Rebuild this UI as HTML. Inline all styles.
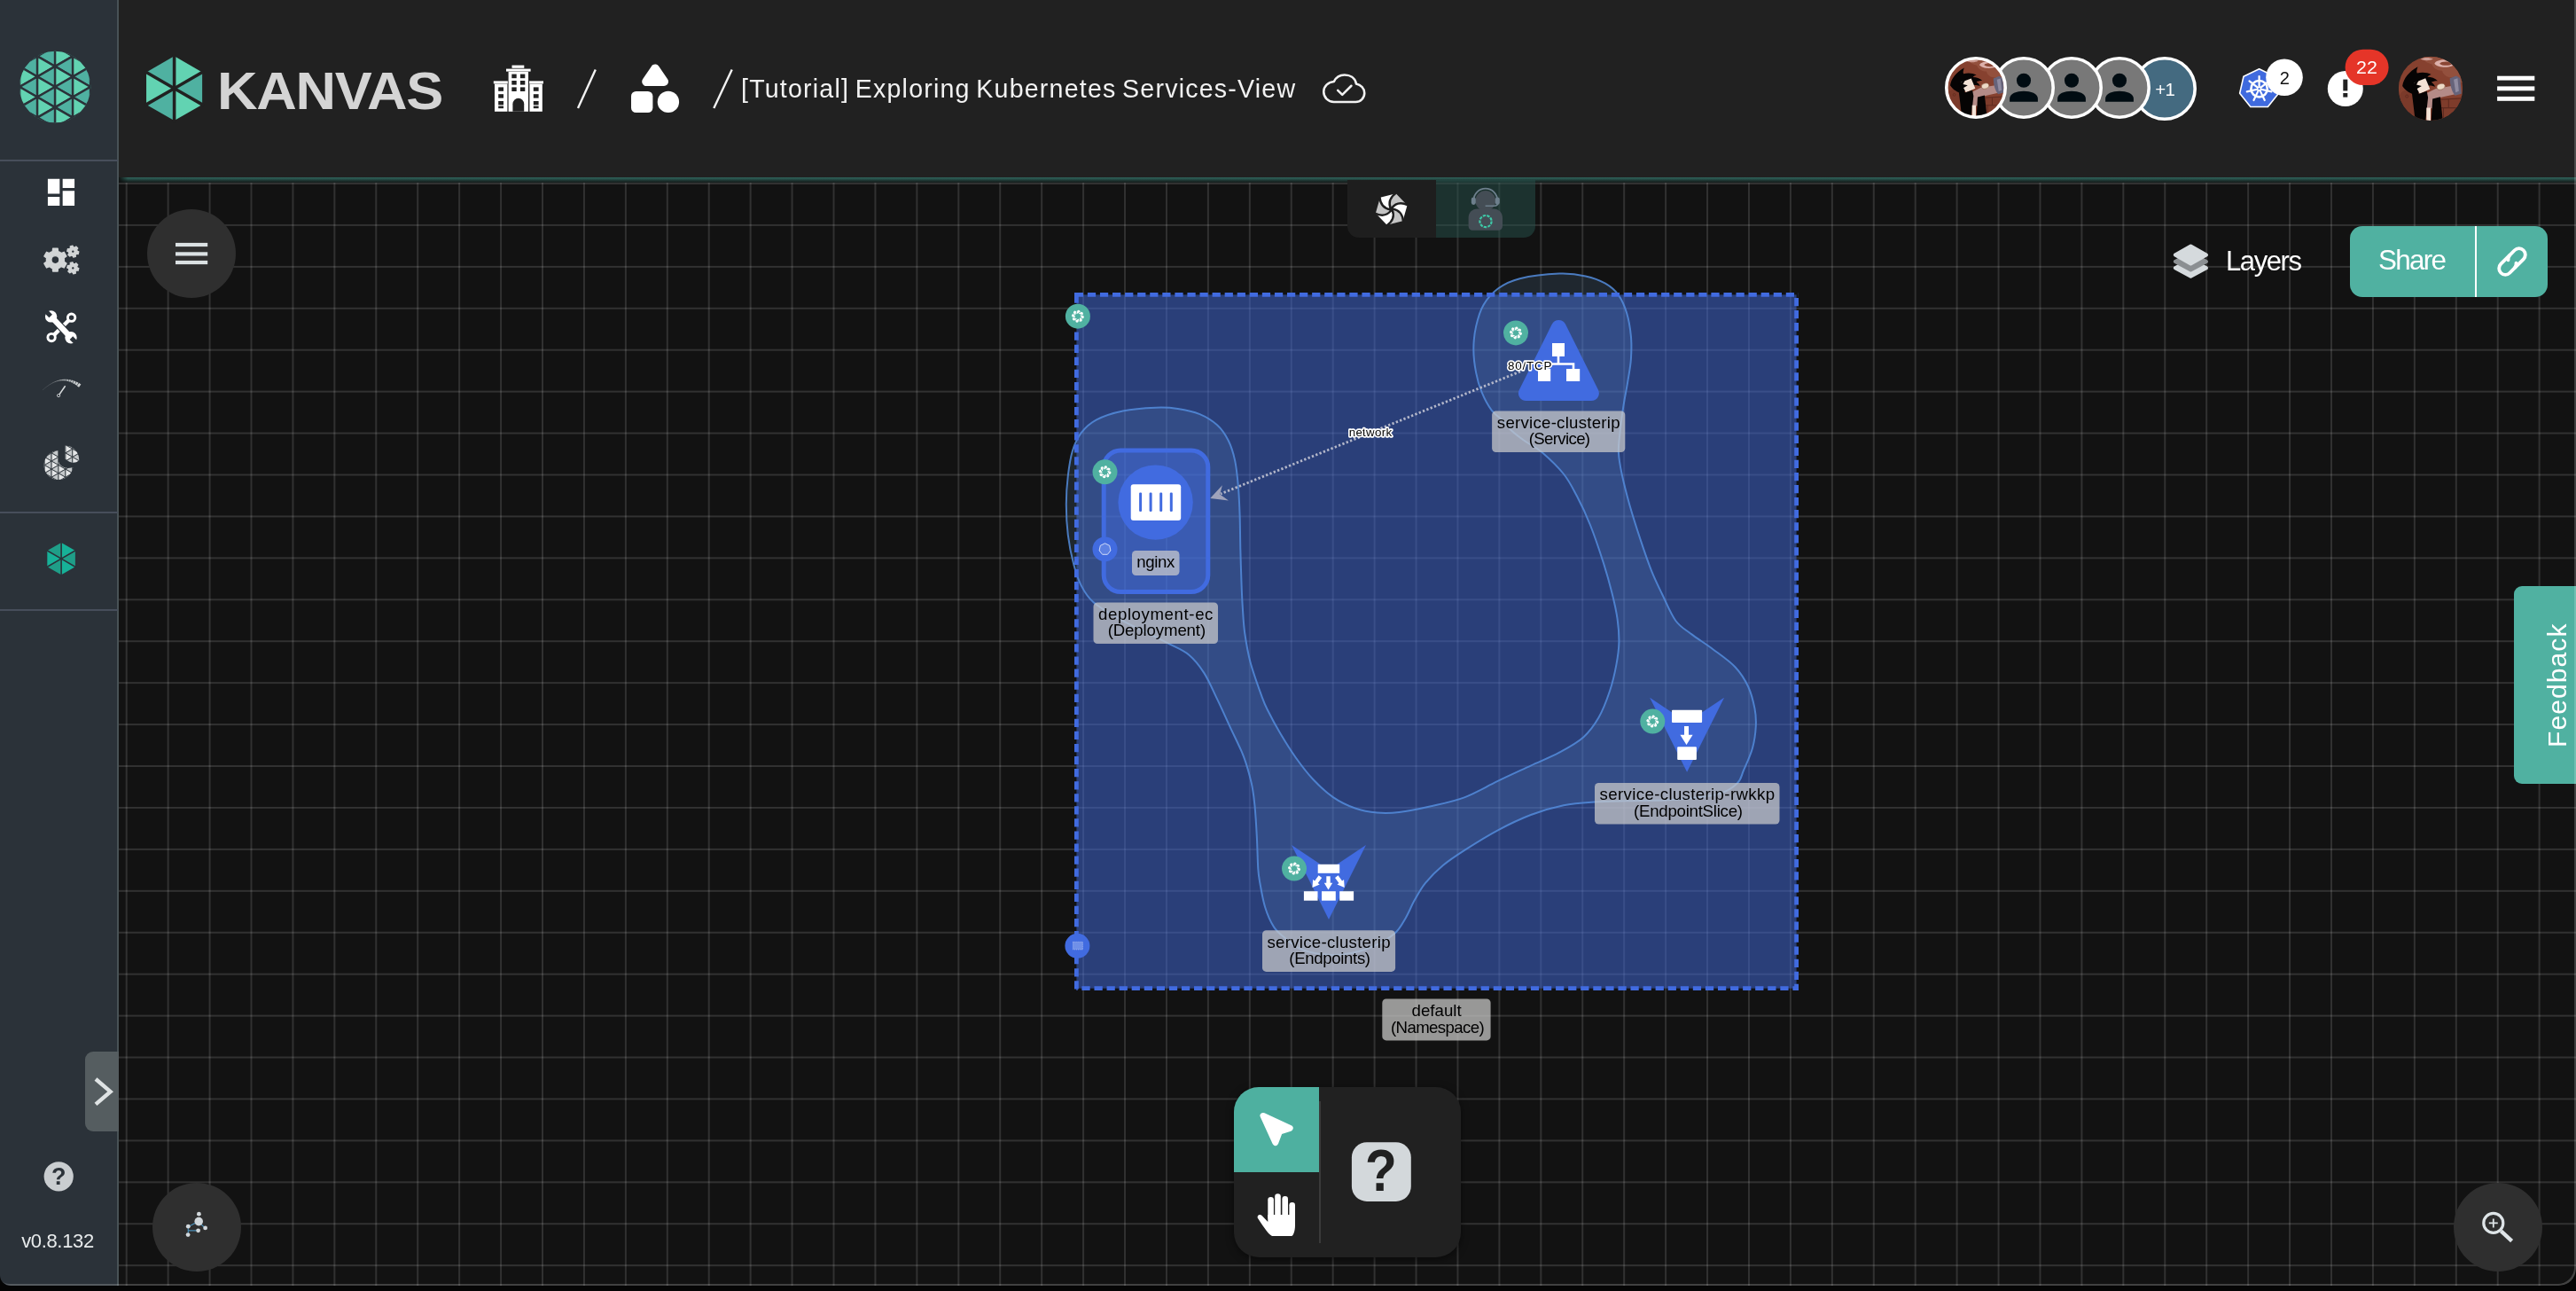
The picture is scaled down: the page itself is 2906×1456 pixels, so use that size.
<!DOCTYPE html>
<html lang="en"><head><meta charset="utf-8"><title>Kanvas</title>
<style>
html,body{margin:0;padding:0;background:#050505;}
body{width:2906px;height:1456px;overflow:hidden;position:relative;font-family:"Liberation Sans", Arial, sans-serif;}
#win{position:absolute;left:0;top:0;width:2906px;height:1450.2px;background:#121212;overflow:hidden;border-radius:0 0 19px 12px;}
#edge{position:absolute;left:0;top:-4px;width:2906px;height:1454.2px;border-radius:0 0 19px 12px;box-shadow:inset -1.9px -1.9px 0 rgba(255,255,255,0.2);pointer-events:none;}
svg text{font-family:"Liberation Sans", Arial, sans-serif;}
#win>*{will-change:transform;}
.abs{position:absolute;}
</style></head><body>
<div id="win">
<svg class="abs" style="left:0;top:0" width="2906" height="1456" viewBox="0 0 2906 1456">
<g fill="#fff" fill-opacity="0.135"><rect x="141.70" y="200" width="2" height="1256"/><rect x="188.63" y="200" width="2" height="1256"/><rect x="235.56" y="200" width="2" height="1256"/><rect x="282.49" y="200" width="2" height="1256"/><rect x="329.42" y="200" width="2" height="1256"/><rect x="376.35" y="200" width="2" height="1256"/><rect x="423.28" y="200" width="2" height="1256"/><rect x="470.21" y="200" width="2" height="1256"/><rect x="517.14" y="200" width="2" height="1256"/><rect x="564.07" y="200" width="2" height="1256"/><rect x="611.00" y="200" width="2" height="1256"/><rect x="657.93" y="200" width="2" height="1256"/><rect x="704.86" y="200" width="2" height="1256"/><rect x="751.79" y="200" width="2" height="1256"/><rect x="798.72" y="200" width="2" height="1256"/><rect x="845.65" y="200" width="2" height="1256"/><rect x="892.58" y="200" width="2" height="1256"/><rect x="939.51" y="200" width="2" height="1256"/><rect x="986.44" y="200" width="2" height="1256"/><rect x="1033.37" y="200" width="2" height="1256"/><rect x="1080.30" y="200" width="2" height="1256"/><rect x="1127.23" y="200" width="2" height="1256"/><rect x="1174.16" y="200" width="2" height="1256"/><rect x="1221.09" y="200" width="2" height="1256"/><rect x="1268.02" y="200" width="2" height="1256"/><rect x="1314.95" y="200" width="2" height="1256"/><rect x="1361.88" y="200" width="2" height="1256"/><rect x="1408.81" y="200" width="2" height="1256"/><rect x="1455.74" y="200" width="2" height="1256"/><rect x="1502.67" y="200" width="2" height="1256"/><rect x="1549.60" y="200" width="2" height="1256"/><rect x="1596.53" y="200" width="2" height="1256"/><rect x="1643.46" y="200" width="2" height="1256"/><rect x="1690.39" y="200" width="2" height="1256"/><rect x="1737.32" y="200" width="2" height="1256"/><rect x="1784.25" y="200" width="2" height="1256"/><rect x="1831.18" y="200" width="2" height="1256"/><rect x="1878.11" y="200" width="2" height="1256"/><rect x="1925.04" y="200" width="2" height="1256"/><rect x="1971.97" y="200" width="2" height="1256"/><rect x="2018.90" y="200" width="2" height="1256"/><rect x="2065.83" y="200" width="2" height="1256"/><rect x="2112.76" y="200" width="2" height="1256"/><rect x="2159.69" y="200" width="2" height="1256"/><rect x="2206.62" y="200" width="2" height="1256"/><rect x="2253.55" y="200" width="2" height="1256"/><rect x="2300.48" y="200" width="2" height="1256"/><rect x="2347.41" y="200" width="2" height="1256"/><rect x="2394.34" y="200" width="2" height="1256"/><rect x="2441.27" y="200" width="2" height="1256"/><rect x="2488.20" y="200" width="2" height="1256"/><rect x="2535.13" y="200" width="2" height="1256"/><rect x="2582.06" y="200" width="2" height="1256"/><rect x="2628.99" y="200" width="2" height="1256"/><rect x="2675.92" y="200" width="2" height="1256"/><rect x="2722.85" y="200" width="2" height="1256"/><rect x="2769.78" y="200" width="2" height="1256"/><rect x="2816.71" y="200" width="2" height="1256"/><rect x="2863.64" y="200" width="2" height="1256"/><rect x="134" y="206.00" width="2772" height="2"/><rect x="134" y="252.93" width="2772" height="2"/><rect x="134" y="299.86" width="2772" height="2"/><rect x="134" y="346.79" width="2772" height="2"/><rect x="134" y="393.72" width="2772" height="2"/><rect x="134" y="440.65" width="2772" height="2"/><rect x="134" y="487.58" width="2772" height="2"/><rect x="134" y="534.51" width="2772" height="2"/><rect x="134" y="581.44" width="2772" height="2"/><rect x="134" y="628.37" width="2772" height="2"/><rect x="134" y="675.30" width="2772" height="2"/><rect x="134" y="722.23" width="2772" height="2"/><rect x="134" y="769.16" width="2772" height="2"/><rect x="134" y="816.09" width="2772" height="2"/><rect x="134" y="863.02" width="2772" height="2"/><rect x="134" y="909.95" width="2772" height="2"/><rect x="134" y="956.88" width="2772" height="2"/><rect x="134" y="1003.81" width="2772" height="2"/><rect x="134" y="1050.74" width="2772" height="2"/><rect x="134" y="1097.67" width="2772" height="2"/><rect x="134" y="1144.60" width="2772" height="2"/><rect x="134" y="1191.53" width="2772" height="2"/><rect x="134" y="1238.46" width="2772" height="2"/><rect x="134" y="1285.39" width="2772" height="2"/><rect x="134" y="1332.32" width="2772" height="2"/><rect x="134" y="1379.25" width="2772" height="2"/><rect x="134" y="1426.18" width="2772" height="2"/></g>
<rect x="1214.4" y="332.4" width="812.2" height="782.3" fill="#416be0" fill-opacity="0.5"/><path d="M1759.0,308.6C1746.6,309.1 1725.9,311.4 1714.4,314.2C1702.9,317.0 1697.0,320.4 1690.2,325.3C1683.4,330.2 1677.7,336.8 1673.5,343.9C1669.3,351.0 1667.0,359.7 1665.1,368.1C1663.2,376.5 1662.3,385.4 1662.3,394.1C1662.3,402.8 1663.5,412.1 1665.1,420.1C1666.6,428.2 1668.6,435.3 1671.6,442.4C1674.5,449.5 1678.9,457.6 1682.8,462.9C1686.7,468.2 1691.4,470.3 1695.0,474.0C1698.6,477.7 1700.1,481.0 1704.4,485.0C1708.7,489.0 1715.2,493.9 1721.0,498.0C1726.8,502.1 1731.9,503.6 1739.1,509.7C1746.2,515.8 1757.3,526.2 1763.9,534.5C1770.5,542.8 1773.8,549.8 1778.8,559.3C1783.8,568.8 1788.8,579.1 1793.7,591.5C1798.7,603.9 1804.4,620.9 1808.5,633.7C1812.6,646.5 1815.7,657.7 1818.4,668.4C1821.1,679.1 1823.3,688.7 1824.6,698.1C1825.9,707.5 1826.6,716.2 1826.4,724.8C1826.2,733.4 1825.1,740.5 1823.4,749.6C1821.7,758.7 1819.3,769.4 1816.0,779.3C1812.7,789.2 1808.6,800.3 1803.6,809.0C1798.6,817.7 1793.6,824.8 1786.2,831.4C1778.8,838.0 1768.9,843.3 1759.0,848.7C1749.1,854.1 1738.3,858.2 1726.7,863.6C1715.1,869.0 1701.9,875.0 1689.6,880.9C1677.2,886.8 1665.0,894.4 1652.6,899.1C1640.2,903.8 1627.8,906.2 1615.4,909.0C1603.0,911.8 1588.6,914.8 1578.3,916.0C1568.0,917.2 1561.8,917.2 1553.5,916.5C1545.2,915.8 1537.0,914.4 1528.7,911.5C1520.4,908.6 1511.8,904.5 1503.9,899.1C1496.1,893.7 1488.6,886.7 1481.6,879.3C1474.6,871.9 1468.0,863.2 1461.8,854.5C1455.6,845.8 1449.8,836.4 1444.4,827.3C1439.0,818.2 1433.2,807.2 1429.6,800.0C1426.0,792.8 1426.1,792.8 1422.9,783.9C1419.7,775.0 1413.6,758.3 1410.5,746.7C1407.4,735.1 1405.8,724.8 1404.3,714.5C1402.8,704.2 1402.4,693.9 1401.8,684.8C1401.2,675.7 1401.0,671.1 1400.6,660.0C1400.2,648.9 1399.6,631.4 1399.3,618.3C1399.0,605.1 1399.0,592.7 1398.6,581.1C1398.2,569.5 1397.8,559.2 1396.9,548.9C1396.0,538.6 1395.0,527.8 1393.1,519.1C1391.2,510.4 1389.0,503.4 1385.7,496.8C1382.4,490.2 1378.7,484.4 1373.3,479.5C1367.9,474.6 1360.9,470.2 1353.5,467.1C1346.1,464.0 1337.0,462.1 1328.7,460.9C1320.4,459.7 1314.2,459.3 1303.9,459.7C1293.6,460.1 1277.9,461.1 1266.7,463.4C1255.5,465.7 1244.8,469.2 1237.0,473.3C1229.2,477.4 1224.2,482.2 1219.7,488.2C1215.2,494.2 1212.2,501.1 1209.7,509.2C1207.2,517.2 1206.0,526.6 1204.8,536.5C1203.6,546.4 1202.8,557.6 1202.8,568.7C1202.8,579.9 1203.4,592.2 1204.8,603.4C1206.2,614.5 1208.5,626.1 1211.0,635.6C1213.5,645.1 1216.0,653.2 1219.7,660.4C1223.4,667.6 1226.3,672.8 1233.3,679.0C1240.3,685.2 1252.1,692.0 1261.8,697.6C1271.5,703.2 1282.0,707.6 1291.5,712.4C1301.0,717.1 1310.5,721.8 1318.8,726.1C1327.1,730.5 1334.5,733.0 1341.1,738.5C1347.7,744.0 1353.0,750.7 1358.4,759.1C1363.8,767.5 1368.3,778.6 1373.3,788.9C1378.3,799.2 1383.2,810.4 1388.2,821.1C1393.2,831.8 1399.1,843.0 1403.0,853.3C1406.9,863.6 1409.6,873.9 1411.7,883.0C1413.8,892.1 1414.4,897.5 1415.4,907.8C1416.4,918.1 1417.3,933.2 1417.9,945.0C1418.5,956.8 1418.7,970.5 1419.2,978.5C1419.7,986.5 1419.6,985.9 1420.9,993.3C1422.2,1000.7 1424.4,1014.3 1427.1,1023.0C1429.8,1031.7 1433.3,1039.6 1437.0,1045.4C1440.7,1051.2 1444.5,1053.6 1449.4,1057.7C1454.4,1061.8 1459.7,1067.0 1466.7,1070.1C1473.7,1073.2 1483.2,1075.3 1491.5,1076.3C1499.8,1077.3 1506.8,1077.7 1516.3,1076.3C1525.8,1074.9 1539.0,1071.6 1548.5,1067.7C1558.0,1063.8 1567.1,1058.2 1573.3,1052.8C1579.5,1047.4 1582.0,1041.6 1585.7,1035.4C1589.4,1029.2 1591.9,1022.2 1595.6,1015.6C1599.3,1009.0 1602.6,1002.4 1608.0,995.8C1613.4,989.2 1620.4,982.2 1627.8,976.0C1635.2,969.8 1642.3,965.2 1652.6,958.6C1662.9,952.0 1677.4,942.9 1689.8,936.3C1702.2,929.7 1714.7,923.7 1727.0,919.0C1739.3,914.3 1752.0,910.6 1763.9,908.2C1775.8,905.8 1786.2,905.3 1798.6,904.5C1811.0,903.7 1823.4,903.6 1838.3,903.2C1853.2,902.8 1871.3,903.2 1887.8,902.0C1904.3,900.8 1925.4,898.9 1937.4,895.8C1949.4,892.7 1954.8,887.9 1959.7,883.4C1964.7,878.9 1964.2,875.1 1967.1,868.5C1970.0,861.9 1974.7,852.0 1977.0,843.7C1979.3,835.5 1980.4,826.4 1980.8,819.0C1981.2,811.6 1981.0,806.6 1979.5,799.1C1978.0,791.6 1975.8,782.1 1972.1,774.3C1968.4,766.4 1963.8,759.0 1957.2,752.0C1950.6,745.0 1940.7,738.4 1932.4,732.2C1924.2,726.0 1914.7,720.3 1907.7,714.9C1900.7,709.5 1895.7,707.4 1890.3,700.0C1884.9,692.6 1880.0,680.2 1875.4,670.8C1870.9,661.4 1867.1,653.9 1863.0,643.6C1858.9,633.3 1854.8,621.3 1850.7,608.9C1846.6,596.5 1841.8,581.6 1838.3,569.2C1834.8,556.8 1831.7,544.4 1829.6,534.5C1827.5,524.6 1826.2,517.9 1825.9,509.7C1825.6,501.5 1826.9,493.9 1827.8,485.2C1828.7,476.5 1830.1,466.3 1831.5,457.3C1832.9,448.3 1834.7,440.0 1836.1,431.3C1837.5,422.6 1839.3,414.0 1839.9,405.3C1840.5,396.6 1840.7,387.9 1839.9,379.2C1839.1,370.5 1837.5,360.9 1835.2,353.2C1832.9,345.5 1829.9,338.4 1825.9,332.8C1821.9,327.2 1817.2,323.3 1811.0,319.7C1804.8,316.1 1797.4,313.2 1788.7,311.4C1780.0,309.5 1771.4,308.1 1759.0,308.6Z" fill="rgb(105,158,218)" fill-opacity="0.15" stroke="rgb(84,140,220)" stroke-opacity="0.85" stroke-width="2"/><g fill="none" stroke="#416be0" stroke-width="4.8" stroke-dasharray="9.25 4.82"><line x1="1214.4" y1="332.4" x2="2029" y2="332.4" stroke-dashoffset="1.6"/><line x1="1214.4" y1="332.4" x2="1214.4" y2="1117.1" stroke-dashoffset="0"/><line x1="1214.4" y1="1114.7" x2="2029" y2="1114.7" stroke-dashoffset="8.07"/><line x1="2026.6" y1="332.4" x2="2026.6" y2="1117.1" stroke-dashoffset="10.55"/></g><rect x="1212" y="330" width="4.8" height="4.8" fill="#416be0"/><line x1="1715" y1="419" x2="1377" y2="557" stroke="#b3b7ca" stroke-width="2.8" stroke-dasharray="2.33 2.33"/><polygon points="1365.2,562 1378.9,547.2 1376.2,557.4 1385.9,564.4" fill="#9fa3bb"/><rect x="1245.2" y="508" width="117.6" height="159.6" rx="19" fill="#416be0" fill-opacity="0.5" stroke="#416be0" stroke-width="5"/><circle cx="1303.6" cy="566.6" r="42.2" fill="#416be0"/><rect x="1275.7" y="546.2" width="56.5" height="40.9" rx="3" fill="#fff"/><rect x="1285.1" y="555.5" width="3" height="21.5" rx="1.2" fill="#416be0"/><rect x="1296.6" y="555.5" width="3" height="21.5" rx="1.2" fill="#416be0"/><rect x="1308.2" y="555.5" width="3" height="21.5" rx="1.2" fill="#416be0"/><rect x="1319.8" y="555.5" width="3" height="21.5" rx="1.2" fill="#416be0"/><rect x="1277.0" y="621.0" width="53.5" height="28.0" rx="4.5" fill="#cccccc" fill-opacity="0.72"/><text x="1303.8" y="640.2" text-anchor="middle" textLength="43.0" lengthAdjust="spacing" font-size="18.64" fill="#000">nginx</text><rect x="1233.5" y="679.4" width="140.5" height="46.6" rx="4.5" fill="#cccccc" fill-opacity="0.72"/><text x="1303.7" y="698.6" text-anchor="middle" textLength="129.4" lengthAdjust="spacing" font-size="18.64" fill="#000">deployment-ec</text><text x="1304.9" y="717.3" text-anchor="middle" textLength="110.4" lengthAdjust="spacing" font-size="18.64" fill="#000">(Deployment)</text><circle cx="1246.5" cy="532.3" r="14" fill="#50b1a1"/><g fill-opacity="1"><ellipse cx="1251.26" cy="532.30" rx="2.72" ry="1.84" transform="rotate(58.0 1251.26 532.30)" fill="#fff"/><ellipse cx="1249.87" cy="535.67" rx="2.72" ry="1.84" transform="rotate(103.0 1249.87 535.67)" fill="#fff"/><ellipse cx="1246.50" cy="537.06" rx="2.72" ry="1.84" transform="rotate(148.0 1246.50 537.06)" fill="#fff"/><ellipse cx="1243.13" cy="535.67" rx="2.72" ry="1.84" transform="rotate(193.0 1243.13 535.67)" fill="#fff"/><ellipse cx="1241.74" cy="532.30" rx="2.72" ry="1.84" transform="rotate(238.0 1241.74 532.30)" fill="#fff"/><ellipse cx="1243.13" cy="528.93" rx="2.72" ry="1.84" transform="rotate(283.0 1243.13 528.93)" fill="#fff"/><ellipse cx="1246.50" cy="527.54" rx="2.72" ry="1.84" transform="rotate(328.0 1246.50 527.54)" fill="#fff"/><ellipse cx="1249.87" cy="528.93" rx="2.72" ry="1.84" transform="rotate(373.0 1249.87 528.93)" fill="#fff"/></g><path d="M1249.19,531.87L1252.03,536.71M1248.70,533.90L1247.30,539.33M1246.93,534.99L1242.09,537.83M1244.90,534.50L1239.47,533.10M1243.81,532.73L1240.97,527.89M1244.30,530.70L1245.70,525.27M1246.07,529.61L1250.91,526.77M1248.10,530.10L1253.53,531.50" stroke="#50b1a1" stroke-width="0.82" fill="none"/><circle cx="1246.5" cy="532.3" r="2.99" fill="#50b1a1"/><circle cx="1246.5" cy="619.4" r="14" fill="#416be0"/><polygon points="1246.5,612.8 1251.7,615.3 1252.9,620.9 1249.4,625.3 1243.6,625.3 1240.1,620.9 1241.3,615.3" fill="#fff" fill-opacity="0.15" stroke="#dfe6fb" stroke-width="0.9"/><path d="M1750.71,365.80A8.6,8.6 0 0,1 1766.09,365.80L1802.98,439.66A8.6,8.6 0 0,1 1795.29,452.10L1721.51,452.10A8.6,8.6 0 0,1 1713.82,439.66Z" fill="#416be0"/><rect x="1751" y="387" width="14" height="15" fill="#fff"/><rect x="1735" y="416" width="14.2" height="14" fill="#fff"/><rect x="1767" y="416" width="15.2" height="14" fill="#fff"/><path d="M1758,402v9M1742,417v-6.5h33v6.5" fill="none" stroke="#fff" stroke-width="2.6"/><circle cx="1710" cy="375.4" r="14" fill="#50b1a1"/><g fill-opacity="1"><ellipse cx="1714.76" cy="375.40" rx="2.72" ry="1.84" transform="rotate(58.0 1714.76 375.40)" fill="#fff"/><ellipse cx="1713.37" cy="378.77" rx="2.72" ry="1.84" transform="rotate(103.0 1713.37 378.77)" fill="#fff"/><ellipse cx="1710.00" cy="380.16" rx="2.72" ry="1.84" transform="rotate(148.0 1710.00 380.16)" fill="#fff"/><ellipse cx="1706.63" cy="378.77" rx="2.72" ry="1.84" transform="rotate(193.0 1706.63 378.77)" fill="#fff"/><ellipse cx="1705.24" cy="375.40" rx="2.72" ry="1.84" transform="rotate(238.0 1705.24 375.40)" fill="#fff"/><ellipse cx="1706.63" cy="372.03" rx="2.72" ry="1.84" transform="rotate(283.0 1706.63 372.03)" fill="#fff"/><ellipse cx="1710.00" cy="370.64" rx="2.72" ry="1.84" transform="rotate(328.0 1710.00 370.64)" fill="#fff"/><ellipse cx="1713.37" cy="372.03" rx="2.72" ry="1.84" transform="rotate(373.0 1713.37 372.03)" fill="#fff"/></g><path d="M1712.69,374.97L1715.53,379.81M1712.20,377.00L1710.80,382.43M1710.43,378.09L1705.59,380.93M1708.40,377.60L1702.97,376.20M1707.31,375.83L1704.47,370.99M1707.80,373.80L1709.20,368.37M1709.57,372.71L1714.41,369.87M1711.60,373.20L1717.03,374.60" stroke="#50b1a1" stroke-width="0.82" fill="none"/><circle cx="1710" cy="375.4" r="2.99" fill="#50b1a1"/><rect x="1683.1" y="463.5" width="150.2" height="46.6" rx="4.5" fill="#cccccc" fill-opacity="0.72"/><text x="1758.2" y="482.7" text-anchor="middle" textLength="138.7" lengthAdjust="spacing" font-size="18.64" fill="#000">service-clusterip</text><text x="1759.4" y="501.4" text-anchor="middle" textLength="69.3" lengthAdjust="spacing" font-size="18.64" fill="#000">(Service)</text><text x="1725.7" y="417.4" text-anchor="middle" textLength="49.6" lengthAdjust="spacing" font-size="13.4" fill="#000" stroke="#fff" stroke-width="3.3" stroke-linejoin="round" paint-order="stroke">80/TCP</text><text x="1545.9" y="491.6" text-anchor="middle" textLength="48.4" lengthAdjust="spacing" font-size="13.4" fill="#000" stroke="#fff" stroke-width="3.3" stroke-linejoin="round" paint-order="stroke">network</text><polygon points="1861.1,786.7 1903.1,814.7 1945.1,786.7 1903.1,870.7" fill="#416be0"/><rect x="1886" y="800.8" width="34.1" height="14.2" rx="1" fill="#fff"/><rect x="1892.2" y="842.2" width="21.7" height="14.9" rx="1" fill="#fff"/><path d="M1900,819.1h5v9.7h4.6l-7.1,11.2l-7.1,-11.2h4.6z" fill="#fff"/><circle cx="1864.3" cy="813.6" r="14" fill="#50b1a1"/><g fill-opacity="1"><ellipse cx="1869.06" cy="813.60" rx="2.72" ry="1.84" transform="rotate(58.0 1869.06 813.60)" fill="#fff"/><ellipse cx="1867.67" cy="816.97" rx="2.72" ry="1.84" transform="rotate(103.0 1867.67 816.97)" fill="#fff"/><ellipse cx="1864.30" cy="818.36" rx="2.72" ry="1.84" transform="rotate(148.0 1864.30 818.36)" fill="#fff"/><ellipse cx="1860.93" cy="816.97" rx="2.72" ry="1.84" transform="rotate(193.0 1860.93 816.97)" fill="#fff"/><ellipse cx="1859.54" cy="813.60" rx="2.72" ry="1.84" transform="rotate(238.0 1859.54 813.60)" fill="#fff"/><ellipse cx="1860.93" cy="810.23" rx="2.72" ry="1.84" transform="rotate(283.0 1860.93 810.23)" fill="#fff"/><ellipse cx="1864.30" cy="808.84" rx="2.72" ry="1.84" transform="rotate(328.0 1864.30 808.84)" fill="#fff"/><ellipse cx="1867.67" cy="810.23" rx="2.72" ry="1.84" transform="rotate(373.0 1867.67 810.23)" fill="#fff"/></g><path d="M1866.99,813.17L1869.83,818.01M1866.50,815.20L1865.10,820.63M1864.73,816.29L1859.89,819.13M1862.70,815.80L1857.27,814.40M1861.61,814.03L1858.77,809.19M1862.10,812.00L1863.50,806.57M1863.87,810.91L1868.71,808.07M1865.90,811.40L1871.33,812.80" stroke="#50b1a1" stroke-width="0.82" fill="none"/><circle cx="1864.3" cy="813.6" r="2.99" fill="#50b1a1"/><rect x="1799.0" y="883.0" width="208.5" height="46.6" rx="4.5" fill="#cccccc" fill-opacity="0.72"/><text x="1903.3" y="902.2" text-anchor="middle" textLength="197.4" lengthAdjust="spacing" font-size="18.64" fill="#000">service-clusterip-rwkkp</text><text x="1904.5" y="920.9" text-anchor="middle" textLength="122.9" lengthAdjust="spacing" font-size="18.64" fill="#000">(EndpointSlice)</text><polygon points="1457.0,953.0 1499.0,981.0 1541.0,953.0 1499.0,1037.0" fill="#416be0"/><rect x="1486.7" y="974.8" width="24.5" height="10" fill="#fff"/><rect x="1470.9" y="1005.2" width="15.6" height="10.5" fill="#fff"/><rect x="1491" y="1005.2" width="15.8" height="10.5" fill="#fff"/><rect x="1511.2" y="1005.2" width="15.9" height="10.5" fill="#fff"/><path d="M-2.2,0h4.4v7.6h2.5l-4.7,7.6l-4.7,-7.6h2.5z" fill="#fff" transform="translate(1498.5,988.2)"/><path d="M-2.2,0h4.4v7.6h2.5l-4.7,7.6l-4.7,-7.6h2.5z" fill="#fff" transform="translate(1489.4,988.6) rotate(36)"/><path d="M-2.2,0h4.4v7.6h2.5l-4.7,7.6l-4.7,-7.6h2.5z" fill="#fff" transform="translate(1507.8,988.6) rotate(-36)"/><circle cx="1460" cy="979.6" r="14" fill="#50b1a1"/><g fill-opacity="1"><ellipse cx="1464.76" cy="979.60" rx="2.72" ry="1.84" transform="rotate(58.0 1464.76 979.60)" fill="#fff"/><ellipse cx="1463.37" cy="982.97" rx="2.72" ry="1.84" transform="rotate(103.0 1463.37 982.97)" fill="#fff"/><ellipse cx="1460.00" cy="984.36" rx="2.72" ry="1.84" transform="rotate(148.0 1460.00 984.36)" fill="#fff"/><ellipse cx="1456.63" cy="982.97" rx="2.72" ry="1.84" transform="rotate(193.0 1456.63 982.97)" fill="#fff"/><ellipse cx="1455.24" cy="979.60" rx="2.72" ry="1.84" transform="rotate(238.0 1455.24 979.60)" fill="#fff"/><ellipse cx="1456.63" cy="976.23" rx="2.72" ry="1.84" transform="rotate(283.0 1456.63 976.23)" fill="#fff"/><ellipse cx="1460.00" cy="974.84" rx="2.72" ry="1.84" transform="rotate(328.0 1460.00 974.84)" fill="#fff"/><ellipse cx="1463.37" cy="976.23" rx="2.72" ry="1.84" transform="rotate(373.0 1463.37 976.23)" fill="#fff"/></g><path d="M1462.69,979.17L1465.53,984.01M1462.20,981.20L1460.80,986.63M1460.43,982.29L1455.59,985.13M1458.40,981.80L1452.97,980.40M1457.31,980.03L1454.47,975.19M1457.80,978.00L1459.20,972.57M1459.57,976.91L1464.41,974.07M1461.60,977.40L1467.03,978.80" stroke="#50b1a1" stroke-width="0.82" fill="none"/><circle cx="1460" cy="979.6" r="2.99" fill="#50b1a1"/><rect x="1424.0" y="1049.3" width="150.1" height="46.6" rx="4.5" fill="#cccccc" fill-opacity="0.72"/><text x="1499.0" y="1068.5" text-anchor="middle" textLength="139.0" lengthAdjust="spacing" font-size="18.64" fill="#000">service-clusterip</text><text x="1500.2" y="1087.2" text-anchor="middle" textLength="91.7" lengthAdjust="spacing" font-size="18.64" fill="#000">(Endpoints)</text><circle cx="1215.9" cy="356.7" r="14" fill="#50b1a1"/><g fill-opacity="1"><ellipse cx="1220.66" cy="356.70" rx="2.72" ry="1.84" transform="rotate(58.0 1220.66 356.70)" fill="#fff"/><ellipse cx="1219.27" cy="360.07" rx="2.72" ry="1.84" transform="rotate(103.0 1219.27 360.07)" fill="#fff"/><ellipse cx="1215.90" cy="361.46" rx="2.72" ry="1.84" transform="rotate(148.0 1215.90 361.46)" fill="#fff"/><ellipse cx="1212.53" cy="360.07" rx="2.72" ry="1.84" transform="rotate(193.0 1212.53 360.07)" fill="#fff"/><ellipse cx="1211.14" cy="356.70" rx="2.72" ry="1.84" transform="rotate(238.0 1211.14 356.70)" fill="#fff"/><ellipse cx="1212.53" cy="353.33" rx="2.72" ry="1.84" transform="rotate(283.0 1212.53 353.33)" fill="#fff"/><ellipse cx="1215.90" cy="351.94" rx="2.72" ry="1.84" transform="rotate(328.0 1215.90 351.94)" fill="#fff"/><ellipse cx="1219.27" cy="353.33" rx="2.72" ry="1.84" transform="rotate(373.0 1219.27 353.33)" fill="#fff"/></g><path d="M1218.59,356.27L1221.43,361.11M1218.10,358.30L1216.70,363.73M1216.33,359.39L1211.49,362.23M1214.30,358.90L1208.87,357.50M1213.21,357.13L1210.37,352.29M1213.70,355.10L1215.10,349.67M1215.47,354.01L1220.31,351.17M1217.50,354.50L1222.93,355.90" stroke="#50b1a1" stroke-width="0.82" fill="none"/><circle cx="1215.9" cy="356.7" r="2.99" fill="#50b1a1"/><circle cx="1215.4" cy="1066.8" r="14" fill="#416be0"/><rect x="1210.4" y="1062.3" width="11" height="8.6" fill="#fff" fill-opacity="0.25" stroke="#cfd9f7" stroke-width="0.6" stroke-dasharray="1 1"/><rect x="1559.3" y="1126.4" width="122.3" height="47" rx="4.5" fill="#cccccb" fill-opacity="0.72"/><text x="1620.6" y="1146" text-anchor="middle" textLength="56.2" lengthAdjust="spacing" font-size="18.64" fill="#000">default</text><text x="1621.8" y="1164.9" text-anchor="middle" textLength="105.6" lengthAdjust="spacing" font-size="18.64" fill="#000">(Namespace)</text>
</svg>
<div class="abs" style="left:134px;top:0;width:2772px;height:200px;background:#212121"></div><div class="abs" style="left:134px;top:199.7px;width:2772px;height:6.2px;background:linear-gradient(to bottom,#30625a 0%,#27504a 30%,#1c302d 65%,#161d1c 100%)"></div><div class="abs" style="left:134px;top:199.7px;width:10px;height:6.2px;background:linear-gradient(to right,rgba(14,16,16,0.95),rgba(14,16,16,0))"></div><svg class="abs" style="left:134px;top:0px;" width="2772" height="200" viewBox="134 0 2772 200"><polygon points="196.60,99.70 196.60,63.30 228.12,81.50" fill="#62d3b2"/><polygon points="196.60,99.70 228.12,81.50 228.12,117.90" fill="#4fb1a1"/><polygon points="196.60,99.70 228.12,117.90 196.60,136.10" fill="#62d3b2"/><polygon points="196.60,99.70 196.60,136.10 165.08,117.90" fill="#4fb1a1"/><polygon points="196.60,99.70 165.08,117.90 165.08,81.50" fill="#62d3b2"/><polygon points="196.60,99.70 165.08,81.50 196.60,63.30" fill="#4fb1a1"/><line x1="196.60" y1="99.70" x2="196.60" y2="61.30" stroke="#212121" stroke-width="3.6"/><line x1="196.60" y1="99.70" x2="229.86" y2="80.50" stroke="#212121" stroke-width="3.6"/><line x1="196.60" y1="99.70" x2="229.86" y2="118.90" stroke="#212121" stroke-width="3.6"/><line x1="196.60" y1="99.70" x2="196.60" y2="138.10" stroke="#212121" stroke-width="3.6"/><line x1="196.60" y1="99.70" x2="163.34" y2="118.90" stroke="#212121" stroke-width="3.6"/><line x1="196.60" y1="99.70" x2="163.34" y2="80.50" stroke="#212121" stroke-width="3.6"/><rect x="577.5" y="73.6" width="13.8" height="3.2" fill="#fff"/><rect x="571" y="77.6" width="27.6" height="3" fill="#fff"/><rect x="573.6" y="81" width="22.4" height="44.8" fill="#fff"/><rect x="556.8" y="91.4" width="16" height="3" fill="#fff"/><rect x="597" y="91.4" width="16" height="3" fill="#fff"/><rect x="558" y="94.6" width="14.4" height="31.2" fill="#fff"/><rect x="597.4" y="94.6" width="14.4" height="31.2" fill="#fff"/><rect x="577.3" y="83.6" width="5.4" height="4.6" fill="#212121"/><rect x="586.9" y="83.6" width="5.4" height="4.6" fill="#212121"/><rect x="577.3" y="91" width="5.4" height="4.6" fill="#212121"/><rect x="586.9" y="91" width="5.4" height="4.6" fill="#212121"/><rect x="577.3" y="98.4" width="5.4" height="4.6" fill="#212121"/><rect x="586.9" y="98.4" width="5.4" height="4.6" fill="#212121"/><rect x="562.2" y="98.4" width="5.8" height="4.4" fill="#212121"/><rect x="601.8" y="98.4" width="5.8" height="4.4" fill="#212121"/><rect x="562.2" y="106.2" width="5.8" height="4.4" fill="#212121"/><rect x="601.8" y="106.2" width="5.8" height="4.4" fill="#212121"/><rect x="562.2" y="114" width="5.8" height="4.4" fill="#212121"/><rect x="601.8" y="114" width="5.8" height="4.4" fill="#212121"/><rect x="562.2" y="119.6" width="5.8" height="2.6" fill="#212121"/><rect x="601.8" y="119.6" width="5.8" height="2.6" fill="#212121"/><path d="M578.4,125.8v-8.6a6.4,6.4 0 0,1 12.8,0v8.6z" fill="#212121"/><line x1="671.8" y1="78.6" x2="652" y2="121.9" stroke="#f2f2f2" stroke-width="2.4"/><line x1="825.7" y1="78.6" x2="805.3" y2="121.9" stroke="#f2f2f2" stroke-width="2.4"/><polygon points="739.1,77.5 729.2,92 749,92" fill="#fff" stroke="#fff" stroke-width="10" stroke-linejoin="round"/><rect x="712" y="102.9" width="24.4" height="24.2" rx="5.5" fill="#fff"/><circle cx="753.9" cy="114.9" r="12.2" fill="#fff"/><g transform="translate(1490.5,72.6) scale(2.12)" fill="none" stroke="#f2f2f2" stroke-width="1.2" stroke-linejoin="round" stroke-linecap="round"><path d="M18.6,10.3C18,7 15.2,5.6 12.4,5.6c-2.4,0 -4.6,1.4 -5.6,3.5C3.6,9.4 1.3,11.6 1.3,14.6c0,3 2.4,5.4 5.4,5.4h11.6c2.6,0 4.7,-2.1 4.7,-4.7c0,-2.5 -1.9,-4.5 -4.4,-5z"/><path d="M8.8,13.8l2.4,2.4l4.8,-4.8"/></g><defs><clipPath id="av1"><circle cx="50" cy="50" r="50"/></clipPath></defs><circle cx="2442" cy="100" r="34.2" fill="#446a80" stroke="#fff" stroke-width="3.6"/><text x="2442.3" y="108.3" text-anchor="middle" font-size="20.4" fill="#fff" letter-spacing="-0.6">+1</text><circle cx="2391" cy="99" r="33.2" fill="#787878" stroke="#fff" stroke-width="3.6"/><circle cx="2391" cy="90.8" r="8.05" fill="#010c12"/><path d="M2375.1,114.8v-3.8c0,-5.4 8,-8.3 15.9,-8.3s15.9,2.9 15.9,8.3v3.8z" fill="#010c12"/><circle cx="2337" cy="99" r="33.2" fill="#787878" stroke="#fff" stroke-width="3.6"/><circle cx="2337" cy="90.8" r="8.05" fill="#010c12"/><path d="M2321.1,114.8v-3.8c0,-5.4 8,-8.3 15.9,-8.3s15.9,2.9 15.9,8.3v3.8z" fill="#010c12"/><circle cx="2283" cy="99" r="33.2" fill="#787878" stroke="#fff" stroke-width="3.6"/><circle cx="2283" cy="90.8" r="8.05" fill="#010c12"/><path d="M2267.1,114.8v-3.8c0,-5.4 8,-8.3 15.9,-8.3s15.9,2.9 15.9,8.3v3.8z" fill="#010c12"/><circle cx="2229" cy="99" r="34" fill="#fff"/><g transform="translate(2196,66) scale(0.66)"><g clip-path="url(#av1)">
<rect width="100" height="100" fill="#86412f"/>
<path d="M36,0h64v40c-6,2 -12,-2 -14,-8c-8,2 -16,-2 -18,-10c-8,0 -14,-4 -16,-10c-8,-2 -14,-6 -16,-12z" fill="#93503d"/>
<path d="M56,11c2,-7 26,-9 33,-1c-2,8 -28,9 -33,1z" fill="#dcb0aa"/>
<path d="M64,11c3,-4 16,-4 20,0c-4,4 -16,4 -20,0z" fill="#8a4634"/>
<path d="M34,4c6,-3 14,-3 20,0c-6,3 -14,3 -20,0z" fill="#dcb0aa" opacity="0.8"/>
<path d="M2,60c4,-10 18,-10 22,0l4,40h-26z" fill="#7b3a2a"/>
<circle cx="13" cy="62" r="2.2" fill="none" stroke="#5e2a1f" stroke-width="1"/>
<path d="M64,66l36,-2v36h-36z" fill="#7e3c2b"/>
<path d="M66,67l34,-2M66,80h34M78,67v13M90,80v20M70,80v20" stroke="#5e2a1f" stroke-width="1.4" fill="none"/>
<path d="M6,46c2,-12 10,-22 24,-30c-2,6 -2,8 -1,10c8,-2 16,-1 22,2c-3,1 -5,2 -6,4c6,0 12,2 16,6c-5,0 -8,1 -10,2c3,2 5,4 6,7c-6,-2 -10,-2 -14,-1l-16,14c-8,-2 -16,-6 -21,-14z" fill="#060404"/>
<path d="M24,41l18,-7l7,17l-16,7z" fill="#f3e2d6"/>
<path d="M20,44l12,-8l-4,8l8,2l-10,6z" fill="#060404"/>
<path d="M44,57l14,-7l36,-6l2,13l-36,8l-6,16h-10z" fill="#b48b87"/>
<path d="M20,50l12,8l12,-4l2,10l-4,36h-16c-2,-18 -4,-34 -6,-50z" fill="#060404"/>
<path d="M53,66l12,-3l4,37h-18z" fill="#060404"/>
<path d="M43.5,80h6.5v20h-6.5z" fill="#f3e2d6"/>
<path d="M80,34l10,-4l6,4l2,24l-10,3c-6,-8 -8,-18 -8,-27z" fill="#66637a"/>
<path d="M86,36l6,-2l2,20l-5,2z" fill="#8f8ba0"/>
<ellipse cx="66" cy="47" rx="6.6" ry="4.6" fill="#ecd9c6" stroke="#8a5a44" stroke-width="0.8" transform="rotate(-15 66 47)"/>
</g></g><circle cx="2229" cy="99" r="33.2" fill="none" stroke="#fff" stroke-width="3.6"/><polygon points="2548.60,77.70 2566.19,86.17 2570.54,105.21 2558.36,120.47 2538.84,120.47 2526.66,105.21 2531.01,86.17" fill="#3f6ade" stroke="#fff" stroke-width="1.6" stroke-linejoin="round"/><circle cx="2548.6" cy="100.2" r="9.2" fill="none" stroke="#fff" stroke-width="2.6"/><line x1="2548.60" y1="97.80" x2="2548.60" y2="86.00" stroke="#fff" stroke-width="2.2" stroke-linecap="round"/><line x1="2550.48" y1="98.70" x2="2559.70" y2="91.35" stroke="#fff" stroke-width="2.2" stroke-linecap="round"/><line x1="2550.94" y1="100.73" x2="2562.44" y2="103.36" stroke="#fff" stroke-width="2.2" stroke-linecap="round"/><line x1="2549.64" y1="102.36" x2="2554.76" y2="112.99" stroke="#fff" stroke-width="2.2" stroke-linecap="round"/><line x1="2547.56" y1="102.36" x2="2542.44" y2="112.99" stroke="#fff" stroke-width="2.2" stroke-linecap="round"/><line x1="2546.26" y1="100.73" x2="2534.76" y2="103.36" stroke="#fff" stroke-width="2.2" stroke-linecap="round"/><line x1="2546.72" y1="98.70" x2="2537.50" y2="91.35" stroke="#fff" stroke-width="2.2" stroke-linecap="round"/><circle cx="2548.6" cy="100.2" r="2.6" fill="#fff"/><circle cx="2548.6" cy="100.2" r="1.1" fill="#3f6ade"/><circle cx="2577" cy="87.3" r="20.8" fill="#fff"/><text x="2577.3" y="94.9" text-anchor="middle" font-size="20" fill="#111">2</text><circle cx="2645.8" cy="100" r="20" fill="#fff"/><rect x="2643.3" y="89.6" width="5" height="12.8" fill="#212121"/><rect x="2643.3" y="105" width="5" height="4.6" fill="#212121"/><rect x="2645.6" y="55.8" width="49" height="40.2" rx="20.1" fill="#e53528"/><text x="2670" y="83.4" text-anchor="middle" font-size="20.6" fill="#fff" textLength="23.8" lengthAdjust="spacingAndGlyphs">22</text><g transform="translate(2705.8,63.7) scale(0.724)"><g clip-path="url(#av1)">
<rect width="100" height="100" fill="#86412f"/>
<path d="M36,0h64v40c-6,2 -12,-2 -14,-8c-8,2 -16,-2 -18,-10c-8,0 -14,-4 -16,-10c-8,-2 -14,-6 -16,-12z" fill="#93503d"/>
<path d="M56,11c2,-7 26,-9 33,-1c-2,8 -28,9 -33,1z" fill="#dcb0aa"/>
<path d="M64,11c3,-4 16,-4 20,0c-4,4 -16,4 -20,0z" fill="#8a4634"/>
<path d="M34,4c6,-3 14,-3 20,0c-6,3 -14,3 -20,0z" fill="#dcb0aa" opacity="0.8"/>
<path d="M2,60c4,-10 18,-10 22,0l4,40h-26z" fill="#7b3a2a"/>
<circle cx="13" cy="62" r="2.2" fill="none" stroke="#5e2a1f" stroke-width="1"/>
<path d="M64,66l36,-2v36h-36z" fill="#7e3c2b"/>
<path d="M66,67l34,-2M66,80h34M78,67v13M90,80v20M70,80v20" stroke="#5e2a1f" stroke-width="1.4" fill="none"/>
<path d="M6,46c2,-12 10,-22 24,-30c-2,6 -2,8 -1,10c8,-2 16,-1 22,2c-3,1 -5,2 -6,4c6,0 12,2 16,6c-5,0 -8,1 -10,2c3,2 5,4 6,7c-6,-2 -10,-2 -14,-1l-16,14c-8,-2 -16,-6 -21,-14z" fill="#060404"/>
<path d="M24,41l18,-7l7,17l-16,7z" fill="#f3e2d6"/>
<path d="M20,44l12,-8l-4,8l8,2l-10,6z" fill="#060404"/>
<path d="M44,57l14,-7l36,-6l2,13l-36,8l-6,16h-10z" fill="#b48b87"/>
<path d="M20,50l12,8l12,-4l2,10l-4,36h-16c-2,-18 -4,-34 -6,-50z" fill="#060404"/>
<path d="M53,66l12,-3l4,37h-18z" fill="#060404"/>
<path d="M43.5,80h6.5v20h-6.5z" fill="#f3e2d6"/>
<path d="M80,34l10,-4l6,4l2,24l-10,3c-6,-8 -8,-18 -8,-27z" fill="#66637a"/>
<path d="M86,36l6,-2l2,20l-5,2z" fill="#8f8ba0"/>
<ellipse cx="66" cy="47" rx="6.6" ry="4.6" fill="#ecd9c6" stroke="#8a5a44" stroke-width="0.8" transform="rotate(-15 66 47)"/>
</g></g><rect x="2817.1" y="85.7" width="42.2" height="4.9" fill="#fff"/><rect x="2817.1" y="97.4" width="42.2" height="4.9" fill="#fff"/><rect x="2817.1" y="108.9" width="42.2" height="4.9" fill="#fff"/></svg><div class="abs" style="left:244.6px;top:61px;font-size:59.5px;line-height:84px;font-weight:700;color:#d4d4d4;letter-spacing:-1.2px;transform-origin:0 50%;transform:scaleX(1.06);">KANVAS</div><div class="abs" style="left:836.3px;top:80px;font-size:28.6px;line-height:40px;color:#f2f2f2;letter-spacing:1.2px;word-spacing:-2.6px;white-space:nowrap">[Tutorial] Exploring Kubernetes Services-View</div><div class="abs" style="left:0;top:0;width:131.8px;height:1456px;background:#2b3239;border-right:2.3px solid #485256;"></div><div class="abs" style="left:0;top:179.6px;width:132.6px;height:1.8px;background:#474e5b"></div><div class="abs" style="left:0;top:577px;width:132.6px;height:1.8px;background:#474e5b"></div><div class="abs" style="left:0;top:687.4px;width:132.6px;height:1.8px;background:#474e5b"></div><svg class="abs" style="left:0px;top:0px;" width="134" height="1456" viewBox="0 0 134 1456"><defs><clipPath id="mc"><circle cx="62.1" cy="98.0" r="40.2"/></clipPath></defs><g clip-path="url(#mc)" stroke="#2b3239" stroke-width="2.4" stroke-linejoin="miter"><polygon points="22.10,51.81 22.10,74.91 2.10,63.36" fill="#4fb1a1"/><polygon points="2.10,63.36 2.10,86.45 22.10,74.91" fill="#62d3b2"/><polygon points="22.10,74.91 22.10,98.00 2.10,86.45" fill="#4fb1a1"/><polygon points="2.10,86.45 2.10,109.55 22.10,98.00" fill="#62d3b2"/><polygon points="22.10,98.00 22.10,121.09 2.10,109.55" fill="#4fb1a1"/><polygon points="2.10,109.55 2.10,132.64 22.10,121.09" fill="#62d3b2"/><polygon points="22.10,121.09 22.10,144.19 2.10,132.64" fill="#4fb1a1"/><polygon points="42.10,40.26 42.10,63.36 22.10,51.81" fill="#4fb1a1"/><polygon points="22.10,51.81 22.10,74.91 42.10,63.36" fill="#62d3b2"/><polygon points="42.10,63.36 42.10,86.45 22.10,74.91" fill="#4fb1a1"/><polygon points="22.10,74.91 22.10,98.00 42.10,86.45" fill="#62d3b2"/><polygon points="42.10,86.45 42.10,109.55 22.10,98.00" fill="#4fb1a1"/><polygon points="22.10,98.00 22.10,121.09 42.10,109.55" fill="#62d3b2"/><polygon points="42.10,109.55 42.10,132.64 22.10,121.09" fill="#4fb1a1"/><polygon points="22.10,121.09 22.10,144.19 42.10,132.64" fill="#62d3b2"/><polygon points="42.10,132.64 42.10,155.74 22.10,144.19" fill="#4fb1a1"/><polygon points="62.10,28.72 62.10,51.81 42.10,40.26" fill="#4fb1a1"/><polygon points="42.10,40.26 42.10,63.36 62.10,51.81" fill="#62d3b2"/><polygon points="62.10,51.81 62.10,74.91 42.10,63.36" fill="#4fb1a1"/><polygon points="42.10,63.36 42.10,86.45 62.10,74.91" fill="#62d3b2"/><polygon points="62.10,74.91 62.10,98.00 42.10,86.45" fill="#4fb1a1"/><polygon points="42.10,86.45 42.10,109.55 62.10,98.00" fill="#62d3b2"/><polygon points="62.10,98.00 62.10,121.09 42.10,109.55" fill="#4fb1a1"/><polygon points="42.10,109.55 42.10,132.64 62.10,121.09" fill="#62d3b2"/><polygon points="62.10,121.09 62.10,144.19 42.10,132.64" fill="#4fb1a1"/><polygon points="42.10,132.64 42.10,155.74 62.10,144.19" fill="#62d3b2"/><polygon points="62.10,144.19 62.10,167.28 42.10,155.74" fill="#4fb1a1"/><polygon points="62.10,28.72 62.10,51.81 82.10,40.26" fill="#62d3b2"/><polygon points="82.10,40.26 82.10,63.36 62.10,51.81" fill="#4fb1a1"/><polygon points="62.10,51.81 62.10,74.91 82.10,63.36" fill="#62d3b2"/><polygon points="82.10,63.36 82.10,86.45 62.10,74.91" fill="#4fb1a1"/><polygon points="62.10,74.91 62.10,98.00 82.10,86.45" fill="#62d3b2"/><polygon points="82.10,86.45 82.10,109.55 62.10,98.00" fill="#4fb1a1"/><polygon points="62.10,98.00 62.10,121.09 82.10,109.55" fill="#62d3b2"/><polygon points="82.10,109.55 82.10,132.64 62.10,121.09" fill="#4fb1a1"/><polygon points="62.10,121.09 62.10,144.19 82.10,132.64" fill="#62d3b2"/><polygon points="82.10,132.64 82.10,155.74 62.10,144.19" fill="#4fb1a1"/><polygon points="62.10,144.19 62.10,167.28 82.10,155.74" fill="#62d3b2"/><polygon points="82.10,40.26 82.10,63.36 102.10,51.81" fill="#62d3b2"/><polygon points="102.10,51.81 102.10,74.91 82.10,63.36" fill="#4fb1a1"/><polygon points="82.10,63.36 82.10,86.45 102.10,74.91" fill="#62d3b2"/><polygon points="102.10,74.91 102.10,98.00 82.10,86.45" fill="#4fb1a1"/><polygon points="82.10,86.45 82.10,109.55 102.10,98.00" fill="#62d3b2"/><polygon points="102.10,98.00 102.10,121.09 82.10,109.55" fill="#4fb1a1"/><polygon points="82.10,109.55 82.10,132.64 102.10,121.09" fill="#62d3b2"/><polygon points="102.10,121.09 102.10,144.19 82.10,132.64" fill="#4fb1a1"/><polygon points="82.10,132.64 82.10,155.74 102.10,144.19" fill="#62d3b2"/><polygon points="102.10,51.81 102.10,74.91 122.10,63.36" fill="#62d3b2"/><polygon points="122.10,63.36 122.10,86.45 102.10,74.91" fill="#4fb1a1"/><polygon points="102.10,74.91 102.10,98.00 122.10,86.45" fill="#62d3b2"/><polygon points="122.10,86.45 122.10,109.55 102.10,98.00" fill="#4fb1a1"/><polygon points="102.10,98.00 102.10,121.09 122.10,109.55" fill="#62d3b2"/><polygon points="122.10,109.55 122.10,132.64 102.10,121.09" fill="#4fb1a1"/><polygon points="102.10,121.09 102.10,144.19 122.10,132.64" fill="#62d3b2"/></g><g transform="translate(48.9,196.8) scale(1.675)"><path fill="#fff" d="M3 13h8V3H3v10zm0 8h8v-6H3v6zm10 0h8V11h-8v10zm0-18v6h8V3h-8z"/></g><path d="M67.40,301.76L65.49,302.61L65.14,306.01L59.66,306.01L59.31,302.61L57.40,301.76L55.71,300.53L52.59,301.93L49.85,297.18L52.62,295.18L52.40,293.10L52.62,291.02L49.85,289.02L52.59,284.27L55.71,285.67L57.40,284.44L59.31,283.59L59.66,280.19L65.14,280.19L65.49,283.59L67.40,284.44L69.09,285.67L72.21,284.27L74.95,289.02L72.18,291.02L72.40,293.10L72.18,295.18L74.95,297.18L72.21,301.93L69.09,300.53ZM66.90,293.10A4.5,4.5 0 1,0 57.90,293.10A4.5,4.5 0 1,0 66.90,293.10Z" fill="#d2d5d6" fill-rule="evenodd" stroke="#d2d5d6" stroke-width="1.4" stroke-linejoin="round"/><path d="M86.92,282.30L87.09,283.29L88.79,283.86L88.13,286.48L86.36,286.17L85.73,286.95L84.96,287.59L85.32,289.36L82.72,290.09L82.11,288.40L81.11,288.25L80.17,287.90L78.82,289.09L76.89,287.20L78.05,285.83L77.68,284.90L77.51,283.91L75.81,283.34L76.47,280.72L78.24,281.03L78.87,280.25L79.64,279.61L79.28,277.84L81.88,277.11L82.49,278.80L83.49,278.95L84.43,279.30L85.78,278.11L87.71,280.00L86.55,281.37ZM84.20,283.60A1.9,1.9 0 1,0 80.40,283.60A1.9,1.9 0 1,0 84.20,283.60Z" fill="#d2d5d6" fill-rule="evenodd" stroke="#d2d5d6" stroke-width="1.4" stroke-linejoin="round"/><path d="M86.92,301.00L87.09,301.99L88.79,302.56L88.13,305.18L86.36,304.87L85.73,305.65L84.96,306.29L85.32,308.06L82.72,308.79L82.11,307.10L81.11,306.95L80.17,306.60L78.82,307.79L76.89,305.90L78.05,304.53L77.68,303.60L77.51,302.61L75.81,302.04L76.47,299.42L78.24,299.73L78.87,298.95L79.64,298.31L79.28,296.54L81.88,295.81L82.49,297.50L83.49,297.65L84.43,298.00L85.78,296.81L87.71,298.70L86.55,300.07ZM84.20,302.30A1.9,1.9 0 1,0 80.40,302.30A1.9,1.9 0 1,0 84.20,302.30Z" fill="#d2d5d6" fill-rule="evenodd" stroke="#d2d5d6" stroke-width="1.4" stroke-linejoin="round"/><line x1="80.6" y1="358.2" x2="58.1" y2="380.6" stroke="#fff" stroke-width="4.4"/><circle cx="80.6" cy="358.2" r="4.2" fill="#2b3239" stroke="#fff" stroke-width="2.9"/><circle cx="58.1" cy="380.6" r="4.2" fill="#2b3239" stroke="#fff" stroke-width="2.9"/><line x1="60.6" y1="360.09999999999997" x2="77.0" y2="377.5" stroke="#2b3239" stroke-width="8.6"/><line x1="57.6" y1="356.9" x2="80.0" y2="380.7" stroke="#fff" stroke-width="6.4"/><g transform="translate(57.6,356.9) rotate(-135)"><circle r="6.7" fill="#fff"/><rect x="0.6" y="-2.5" width="9" height="5" fill="#2b3239"/></g><g transform="translate(80.0,380.7) rotate(45)"><circle r="6.7" fill="#fff"/><rect x="0.6" y="-2.5" width="9" height="5" fill="#2b3239"/></g><line x1="48.00" y1="440.00" x2="50.80" y2="437.55" stroke="#d6dadb" stroke-opacity="0.35" stroke-width="0.35"/><line x1="50.74" y1="437.59" x2="53.53" y2="435.43" stroke="#d6dadb" stroke-opacity="0.39" stroke-width="0.36"/><line x1="53.48" y1="435.47" x2="56.26" y2="433.59" stroke="#d6dadb" stroke-opacity="0.43" stroke-width="0.39"/><line x1="56.20" y1="433.62" x2="58.97" y2="432.03" stroke="#d6dadb" stroke-opacity="0.47" stroke-width="0.46"/><line x1="58.91" y1="432.06" x2="61.67" y2="430.76" stroke="#d6dadb" stroke-opacity="0.51" stroke-width="0.55"/><line x1="61.61" y1="430.79" x2="64.36" y2="429.77" stroke="#d6dadb" stroke-opacity="0.55" stroke-width="0.68"/><line x1="64.30" y1="429.79" x2="67.04" y2="429.07" stroke="#d6dadb" stroke-opacity="0.59" stroke-width="0.85"/><line x1="66.98" y1="429.08" x2="69.70" y2="428.64" stroke="#d6dadb" stroke-opacity="0.63" stroke-width="1.05"/><line x1="69.65" y1="428.65" x2="72.36" y2="428.50" stroke="#d6dadb" stroke-opacity="0.68" stroke-width="1.29"/><line x1="72.31" y1="428.50" x2="74.53" y2="428.60" stroke="#d6dadb" stroke-opacity="0.72" stroke-width="1.56"/><line x1="74.95" y1="428.64" x2="77.17" y2="428.97" stroke="#d6dadb" stroke-opacity="0.76" stroke-width="1.88"/><line x1="77.59" y1="429.06" x2="79.79" y2="429.63" stroke="#d6dadb" stroke-opacity="0.80" stroke-width="2.24"/><line x1="80.21" y1="429.76" x2="82.41" y2="430.57" stroke="#d6dadb" stroke-opacity="0.84" stroke-width="2.63"/><line x1="82.83" y1="430.75" x2="85.01" y2="431.79" stroke="#d6dadb" stroke-opacity="0.88" stroke-width="3.07"/><line x1="85.43" y1="432.02" x2="87.61" y2="433.30" stroke="#d6dadb" stroke-opacity="0.92" stroke-width="3.56"/><line x1="88.02" y1="433.57" x2="90.19" y2="435.09" stroke="#d6dadb" stroke-opacity="0.96" stroke-width="4.08"/><line x1="66.7" y1="445.2" x2="73.6" y2="435.3" stroke="#d6dadb" stroke-width="1.5"/><circle cx="66.1" cy="446.1" r="1.6" fill="#2b3239" stroke="#d6dadb" stroke-width="0.9"/><defs><clipPath id="pc1"><path d="M65.80,520.60L65.71,508.20A16.4,16.4 0 1,0 82.24,526.88Q70.00,530.60 65.80,520.60Z"/></clipPath><clipPath id="pc2"><path d="M73.40,517.60L73.40,502.60A16.4,16.4 0 0,1 89.39,519.16Q82.40,525.10 73.40,517.60Z"/></clipPath></defs><g clip-path="url(#pc1)" stroke="#2b3239" stroke-width="0.8"><polygon points="42.30,501.79 42.30,510.92 34.40,506.36" fill="#c4c8ca"/><polygon points="34.40,506.36 34.40,515.48 42.30,510.92" fill="#e4e6e7"/><polygon points="42.30,510.92 42.30,520.04 34.40,515.48" fill="#c4c8ca"/><polygon points="34.40,515.48 34.40,524.60 42.30,520.04" fill="#e4e6e7"/><polygon points="42.30,520.04 42.30,529.16 34.40,524.60" fill="#c4c8ca"/><polygon points="34.40,524.60 34.40,533.72 42.30,529.16" fill="#e4e6e7"/><polygon points="42.30,529.16 42.30,538.28 34.40,533.72" fill="#c4c8ca"/><polygon points="34.40,533.72 34.40,542.84 42.30,538.28" fill="#e4e6e7"/><polygon points="42.30,538.28 42.30,547.41 34.40,542.84" fill="#c4c8ca"/><polygon points="50.20,497.23 50.20,506.36 42.30,501.79" fill="#c4c8ca"/><polygon points="42.30,501.79 42.30,510.92 50.20,506.36" fill="#e4e6e7"/><polygon points="50.20,506.36 50.20,515.48 42.30,510.92" fill="#c4c8ca"/><polygon points="42.30,510.92 42.30,520.04 50.20,515.48" fill="#e4e6e7"/><polygon points="50.20,515.48 50.20,524.60 42.30,520.04" fill="#c4c8ca"/><polygon points="42.30,520.04 42.30,529.16 50.20,524.60" fill="#e4e6e7"/><polygon points="50.20,524.60 50.20,533.72 42.30,529.16" fill="#c4c8ca"/><polygon points="42.30,529.16 42.30,538.28 50.20,533.72" fill="#e4e6e7"/><polygon points="50.20,533.72 50.20,542.84 42.30,538.28" fill="#c4c8ca"/><polygon points="42.30,538.28 42.30,547.41 50.20,542.84" fill="#e4e6e7"/><polygon points="50.20,542.84 50.20,551.97 42.30,547.41" fill="#c4c8ca"/><polygon points="58.10,492.67 58.10,501.79 50.20,497.23" fill="#c4c8ca"/><polygon points="50.20,497.23 50.20,506.36 58.10,501.79" fill="#e4e6e7"/><polygon points="58.10,501.79 58.10,510.92 50.20,506.36" fill="#c4c8ca"/><polygon points="50.20,506.36 50.20,515.48 58.10,510.92" fill="#e4e6e7"/><polygon points="58.10,510.92 58.10,520.04 50.20,515.48" fill="#c4c8ca"/><polygon points="50.20,515.48 50.20,524.60 58.10,520.04" fill="#e4e6e7"/><polygon points="58.10,520.04 58.10,529.16 50.20,524.60" fill="#c4c8ca"/><polygon points="50.20,524.60 50.20,533.72 58.10,529.16" fill="#e4e6e7"/><polygon points="58.10,529.16 58.10,538.28 50.20,533.72" fill="#c4c8ca"/><polygon points="50.20,533.72 50.20,542.84 58.10,538.28" fill="#e4e6e7"/><polygon points="58.10,538.28 58.10,547.41 50.20,542.84" fill="#c4c8ca"/><polygon points="50.20,542.84 50.20,551.97 58.10,547.41" fill="#e4e6e7"/><polygon points="58.10,547.41 58.10,556.53 50.20,551.97" fill="#c4c8ca"/><polygon points="66.00,488.11 66.00,497.23 58.10,492.67" fill="#c4c8ca"/><polygon points="58.10,492.67 58.10,501.79 66.00,497.23" fill="#e4e6e7"/><polygon points="66.00,497.23 66.00,506.36 58.10,501.79" fill="#c4c8ca"/><polygon points="58.10,501.79 58.10,510.92 66.00,506.36" fill="#e4e6e7"/><polygon points="66.00,506.36 66.00,515.48 58.10,510.92" fill="#c4c8ca"/><polygon points="58.10,510.92 58.10,520.04 66.00,515.48" fill="#e4e6e7"/><polygon points="66.00,515.48 66.00,524.60 58.10,520.04" fill="#c4c8ca"/><polygon points="58.10,520.04 58.10,529.16 66.00,524.60" fill="#e4e6e7"/><polygon points="66.00,524.60 66.00,533.72 58.10,529.16" fill="#c4c8ca"/><polygon points="58.10,529.16 58.10,538.28 66.00,533.72" fill="#e4e6e7"/><polygon points="66.00,533.72 66.00,542.84 58.10,538.28" fill="#c4c8ca"/><polygon points="58.10,538.28 58.10,547.41 66.00,542.84" fill="#e4e6e7"/><polygon points="66.00,542.84 66.00,551.97 58.10,547.41" fill="#c4c8ca"/><polygon points="58.10,547.41 58.10,556.53 66.00,551.97" fill="#e4e6e7"/><polygon points="66.00,551.97 66.00,561.09 58.10,556.53" fill="#c4c8ca"/><polygon points="66.00,488.11 66.00,497.23 73.90,492.67" fill="#e4e6e7"/><polygon points="73.90,492.67 73.90,501.79 66.00,497.23" fill="#c4c8ca"/><polygon points="66.00,497.23 66.00,506.36 73.90,501.79" fill="#e4e6e7"/><polygon points="73.90,501.79 73.90,510.92 66.00,506.36" fill="#c4c8ca"/><polygon points="66.00,506.36 66.00,515.48 73.90,510.92" fill="#e4e6e7"/><polygon points="73.90,510.92 73.90,520.04 66.00,515.48" fill="#c4c8ca"/><polygon points="66.00,515.48 66.00,524.60 73.90,520.04" fill="#e4e6e7"/><polygon points="73.90,520.04 73.90,529.16 66.00,524.60" fill="#c4c8ca"/><polygon points="66.00,524.60 66.00,533.72 73.90,529.16" fill="#e4e6e7"/><polygon points="73.90,529.16 73.90,538.28 66.00,533.72" fill="#c4c8ca"/><polygon points="66.00,533.72 66.00,542.84 73.90,538.28" fill="#e4e6e7"/><polygon points="73.90,538.28 73.90,547.41 66.00,542.84" fill="#c4c8ca"/><polygon points="66.00,542.84 66.00,551.97 73.90,547.41" fill="#e4e6e7"/><polygon points="73.90,547.41 73.90,556.53 66.00,551.97" fill="#c4c8ca"/><polygon points="66.00,551.97 66.00,561.09 73.90,556.53" fill="#e4e6e7"/><polygon points="73.90,492.67 73.90,501.79 81.80,497.23" fill="#e4e6e7"/><polygon points="81.80,497.23 81.80,506.36 73.90,501.79" fill="#c4c8ca"/><polygon points="73.90,501.79 73.90,510.92 81.80,506.36" fill="#e4e6e7"/><polygon points="81.80,506.36 81.80,515.48 73.90,510.92" fill="#c4c8ca"/><polygon points="73.90,510.92 73.90,520.04 81.80,515.48" fill="#e4e6e7"/><polygon points="81.80,515.48 81.80,524.60 73.90,520.04" fill="#c4c8ca"/><polygon points="73.90,520.04 73.90,529.16 81.80,524.60" fill="#e4e6e7"/><polygon points="81.80,524.60 81.80,533.72 73.90,529.16" fill="#c4c8ca"/><polygon points="73.90,529.16 73.90,538.28 81.80,533.72" fill="#e4e6e7"/><polygon points="81.80,533.72 81.80,542.84 73.90,538.28" fill="#c4c8ca"/><polygon points="73.90,538.28 73.90,547.41 81.80,542.84" fill="#e4e6e7"/><polygon points="81.80,542.84 81.80,551.97 73.90,547.41" fill="#c4c8ca"/><polygon points="73.90,547.41 73.90,556.53 81.80,551.97" fill="#e4e6e7"/><polygon points="81.80,497.23 81.80,506.36 89.70,501.79" fill="#e4e6e7"/><polygon points="89.70,501.79 89.70,510.92 81.80,506.36" fill="#c4c8ca"/><polygon points="81.80,506.36 81.80,515.48 89.70,510.92" fill="#e4e6e7"/><polygon points="89.70,510.92 89.70,520.04 81.80,515.48" fill="#c4c8ca"/><polygon points="81.80,515.48 81.80,524.60 89.70,520.04" fill="#e4e6e7"/><polygon points="89.70,520.04 89.70,529.16 81.80,524.60" fill="#c4c8ca"/><polygon points="81.80,524.60 81.80,533.72 89.70,529.16" fill="#e4e6e7"/><polygon points="89.70,529.16 89.70,538.28 81.80,533.72" fill="#c4c8ca"/><polygon points="81.80,533.72 81.80,542.84 89.70,538.28" fill="#e4e6e7"/><polygon points="89.70,538.28 89.70,547.41 81.80,542.84" fill="#c4c8ca"/><polygon points="81.80,542.84 81.80,551.97 89.70,547.41" fill="#e4e6e7"/><polygon points="89.70,501.79 89.70,510.92 97.60,506.36" fill="#e4e6e7"/><polygon points="97.60,506.36 97.60,515.48 89.70,510.92" fill="#c4c8ca"/><polygon points="89.70,510.92 89.70,520.04 97.60,515.48" fill="#e4e6e7"/><polygon points="97.60,515.48 97.60,524.60 89.70,520.04" fill="#c4c8ca"/><polygon points="89.70,520.04 89.70,529.16 97.60,524.60" fill="#e4e6e7"/><polygon points="97.60,524.60 97.60,533.72 89.70,529.16" fill="#c4c8ca"/><polygon points="89.70,529.16 89.70,538.28 97.60,533.72" fill="#e4e6e7"/><polygon points="97.60,533.72 97.60,542.84 89.70,538.28" fill="#c4c8ca"/><polygon points="89.70,538.28 89.70,547.41 97.60,542.84" fill="#e4e6e7"/></g><g clip-path="url(#pc2)" stroke="#2b3239" stroke-width="0.8"><polygon points="42.30,501.79 42.30,510.92 34.40,506.36" fill="#c4c8ca"/><polygon points="34.40,506.36 34.40,515.48 42.30,510.92" fill="#e4e6e7"/><polygon points="42.30,510.92 42.30,520.04 34.40,515.48" fill="#c4c8ca"/><polygon points="34.40,515.48 34.40,524.60 42.30,520.04" fill="#e4e6e7"/><polygon points="42.30,520.04 42.30,529.16 34.40,524.60" fill="#c4c8ca"/><polygon points="34.40,524.60 34.40,533.72 42.30,529.16" fill="#e4e6e7"/><polygon points="42.30,529.16 42.30,538.28 34.40,533.72" fill="#c4c8ca"/><polygon points="34.40,533.72 34.40,542.84 42.30,538.28" fill="#e4e6e7"/><polygon points="42.30,538.28 42.30,547.41 34.40,542.84" fill="#c4c8ca"/><polygon points="50.20,497.23 50.20,506.36 42.30,501.79" fill="#c4c8ca"/><polygon points="42.30,501.79 42.30,510.92 50.20,506.36" fill="#e4e6e7"/><polygon points="50.20,506.36 50.20,515.48 42.30,510.92" fill="#c4c8ca"/><polygon points="42.30,510.92 42.30,520.04 50.20,515.48" fill="#e4e6e7"/><polygon points="50.20,515.48 50.20,524.60 42.30,520.04" fill="#c4c8ca"/><polygon points="42.30,520.04 42.30,529.16 50.20,524.60" fill="#e4e6e7"/><polygon points="50.20,524.60 50.20,533.72 42.30,529.16" fill="#c4c8ca"/><polygon points="42.30,529.16 42.30,538.28 50.20,533.72" fill="#e4e6e7"/><polygon points="50.20,533.72 50.20,542.84 42.30,538.28" fill="#c4c8ca"/><polygon points="42.30,538.28 42.30,547.41 50.20,542.84" fill="#e4e6e7"/><polygon points="50.20,542.84 50.20,551.97 42.30,547.41" fill="#c4c8ca"/><polygon points="58.10,492.67 58.10,501.79 50.20,497.23" fill="#c4c8ca"/><polygon points="50.20,497.23 50.20,506.36 58.10,501.79" fill="#e4e6e7"/><polygon points="58.10,501.79 58.10,510.92 50.20,506.36" fill="#c4c8ca"/><polygon points="50.20,506.36 50.20,515.48 58.10,510.92" fill="#e4e6e7"/><polygon points="58.10,510.92 58.10,520.04 50.20,515.48" fill="#c4c8ca"/><polygon points="50.20,515.48 50.20,524.60 58.10,520.04" fill="#e4e6e7"/><polygon points="58.10,520.04 58.10,529.16 50.20,524.60" fill="#c4c8ca"/><polygon points="50.20,524.60 50.20,533.72 58.10,529.16" fill="#e4e6e7"/><polygon points="58.10,529.16 58.10,538.28 50.20,533.72" fill="#c4c8ca"/><polygon points="50.20,533.72 50.20,542.84 58.10,538.28" fill="#e4e6e7"/><polygon points="58.10,538.28 58.10,547.41 50.20,542.84" fill="#c4c8ca"/><polygon points="50.20,542.84 50.20,551.97 58.10,547.41" fill="#e4e6e7"/><polygon points="58.10,547.41 58.10,556.53 50.20,551.97" fill="#c4c8ca"/><polygon points="66.00,488.11 66.00,497.23 58.10,492.67" fill="#c4c8ca"/><polygon points="58.10,492.67 58.10,501.79 66.00,497.23" fill="#e4e6e7"/><polygon points="66.00,497.23 66.00,506.36 58.10,501.79" fill="#c4c8ca"/><polygon points="58.10,501.79 58.10,510.92 66.00,506.36" fill="#e4e6e7"/><polygon points="66.00,506.36 66.00,515.48 58.10,510.92" fill="#c4c8ca"/><polygon points="58.10,510.92 58.10,520.04 66.00,515.48" fill="#e4e6e7"/><polygon points="66.00,515.48 66.00,524.60 58.10,520.04" fill="#c4c8ca"/><polygon points="58.10,520.04 58.10,529.16 66.00,524.60" fill="#e4e6e7"/><polygon points="66.00,524.60 66.00,533.72 58.10,529.16" fill="#c4c8ca"/><polygon points="58.10,529.16 58.10,538.28 66.00,533.72" fill="#e4e6e7"/><polygon points="66.00,533.72 66.00,542.84 58.10,538.28" fill="#c4c8ca"/><polygon points="58.10,538.28 58.10,547.41 66.00,542.84" fill="#e4e6e7"/><polygon points="66.00,542.84 66.00,551.97 58.10,547.41" fill="#c4c8ca"/><polygon points="58.10,547.41 58.10,556.53 66.00,551.97" fill="#e4e6e7"/><polygon points="66.00,551.97 66.00,561.09 58.10,556.53" fill="#c4c8ca"/><polygon points="66.00,488.11 66.00,497.23 73.90,492.67" fill="#e4e6e7"/><polygon points="73.90,492.67 73.90,501.79 66.00,497.23" fill="#c4c8ca"/><polygon points="66.00,497.23 66.00,506.36 73.90,501.79" fill="#e4e6e7"/><polygon points="73.90,501.79 73.90,510.92 66.00,506.36" fill="#c4c8ca"/><polygon points="66.00,506.36 66.00,515.48 73.90,510.92" fill="#e4e6e7"/><polygon points="73.90,510.92 73.90,520.04 66.00,515.48" fill="#c4c8ca"/><polygon points="66.00,515.48 66.00,524.60 73.90,520.04" fill="#e4e6e7"/><polygon points="73.90,520.04 73.90,529.16 66.00,524.60" fill="#c4c8ca"/><polygon points="66.00,524.60 66.00,533.72 73.90,529.16" fill="#e4e6e7"/><polygon points="73.90,529.16 73.90,538.28 66.00,533.72" fill="#c4c8ca"/><polygon points="66.00,533.72 66.00,542.84 73.90,538.28" fill="#e4e6e7"/><polygon points="73.90,538.28 73.90,547.41 66.00,542.84" fill="#c4c8ca"/><polygon points="66.00,542.84 66.00,551.97 73.90,547.41" fill="#e4e6e7"/><polygon points="73.90,547.41 73.90,556.53 66.00,551.97" fill="#c4c8ca"/><polygon points="66.00,551.97 66.00,561.09 73.90,556.53" fill="#e4e6e7"/><polygon points="73.90,492.67 73.90,501.79 81.80,497.23" fill="#e4e6e7"/><polygon points="81.80,497.23 81.80,506.36 73.90,501.79" fill="#c4c8ca"/><polygon points="73.90,501.79 73.90,510.92 81.80,506.36" fill="#e4e6e7"/><polygon points="81.80,506.36 81.80,515.48 73.90,510.92" fill="#c4c8ca"/><polygon points="73.90,510.92 73.90,520.04 81.80,515.48" fill="#e4e6e7"/><polygon points="81.80,515.48 81.80,524.60 73.90,520.04" fill="#c4c8ca"/><polygon points="73.90,520.04 73.90,529.16 81.80,524.60" fill="#e4e6e7"/><polygon points="81.80,524.60 81.80,533.72 73.90,529.16" fill="#c4c8ca"/><polygon points="73.90,529.16 73.90,538.28 81.80,533.72" fill="#e4e6e7"/><polygon points="81.80,533.72 81.80,542.84 73.90,538.28" fill="#c4c8ca"/><polygon points="73.90,538.28 73.90,547.41 81.80,542.84" fill="#e4e6e7"/><polygon points="81.80,542.84 81.80,551.97 73.90,547.41" fill="#c4c8ca"/><polygon points="73.90,547.41 73.90,556.53 81.80,551.97" fill="#e4e6e7"/><polygon points="81.80,497.23 81.80,506.36 89.70,501.79" fill="#e4e6e7"/><polygon points="89.70,501.79 89.70,510.92 81.80,506.36" fill="#c4c8ca"/><polygon points="81.80,506.36 81.80,515.48 89.70,510.92" fill="#e4e6e7"/><polygon points="89.70,510.92 89.70,520.04 81.80,515.48" fill="#c4c8ca"/><polygon points="81.80,515.48 81.80,524.60 89.70,520.04" fill="#e4e6e7"/><polygon points="89.70,520.04 89.70,529.16 81.80,524.60" fill="#c4c8ca"/><polygon points="81.80,524.60 81.80,533.72 89.70,529.16" fill="#e4e6e7"/><polygon points="89.70,529.16 89.70,538.28 81.80,533.72" fill="#c4c8ca"/><polygon points="81.80,533.72 81.80,542.84 89.70,538.28" fill="#e4e6e7"/><polygon points="89.70,538.28 89.70,547.41 81.80,542.84" fill="#c4c8ca"/><polygon points="81.80,542.84 81.80,551.97 89.70,547.41" fill="#e4e6e7"/><polygon points="89.70,501.79 89.70,510.92 97.60,506.36" fill="#e4e6e7"/><polygon points="97.60,506.36 97.60,515.48 89.70,510.92" fill="#c4c8ca"/><polygon points="89.70,510.92 89.70,520.04 97.60,515.48" fill="#e4e6e7"/><polygon points="97.60,515.48 97.60,524.60 89.70,520.04" fill="#c4c8ca"/><polygon points="89.70,520.04 89.70,529.16 97.60,524.60" fill="#e4e6e7"/><polygon points="97.60,524.60 97.60,533.72 89.70,529.16" fill="#c4c8ca"/><polygon points="89.70,529.16 89.70,538.28 97.60,533.72" fill="#e4e6e7"/><polygon points="97.60,533.72 97.60,542.84 89.70,538.28" fill="#c4c8ca"/><polygon points="89.70,538.28 89.70,547.41 97.60,542.84" fill="#e4e6e7"/></g><polygon points="69.10,630.10 69.10,611.90 84.86,621.00" fill="#17b198"/><polygon points="69.10,630.10 84.86,621.00 84.86,639.20" fill="#1f9e88"/><polygon points="69.10,630.10 84.86,639.20 69.10,648.30" fill="#17b198"/><polygon points="69.10,630.10 69.10,648.30 53.34,639.20" fill="#1f9e88"/><polygon points="69.10,630.10 53.34,639.20 53.34,621.00" fill="#17b198"/><polygon points="69.10,630.10 53.34,621.00 69.10,611.90" fill="#1f9e88"/><line x1="69.10" y1="630.10" x2="69.10" y2="609.90" stroke="#2b3239" stroke-width="1.6"/><line x1="69.10" y1="630.10" x2="86.59" y2="620.00" stroke="#2b3239" stroke-width="1.6"/><line x1="69.10" y1="630.10" x2="86.59" y2="640.20" stroke="#2b3239" stroke-width="1.6"/><line x1="69.10" y1="630.10" x2="69.10" y2="650.30" stroke="#2b3239" stroke-width="1.6"/><line x1="69.10" y1="630.10" x2="51.61" y2="640.20" stroke="#2b3239" stroke-width="1.6"/><line x1="69.10" y1="630.10" x2="51.61" y2="620.00" stroke="#2b3239" stroke-width="1.6"/><circle cx="66.2" cy="1326.8" r="16.6" fill="#c9cdd0"/><text x="66.2" y="1336.2" text-anchor="middle" font-size="27" font-weight="700" fill="#2b3239">?</text></svg><div class="abs" style="left:0;top:1385px;width:130px;text-align:center;font-size:22px;line-height:30px;color:#e8ebec;letter-spacing:-0.35px">v0.8.132</div><div class="abs" style="left:96.4px;top:1185.7px;width:38px;height:90px;background:#555d60;border-radius:9px 0 0 9px"></div><svg class="abs" style="left:96px;top:1185px;" width="40" height="92" viewBox="0 0 40 92"><polyline points="12,32 28.6,46.2 12,60.4" fill="none" stroke="#dfe3e4" stroke-width="4.4"/></svg><div class="abs" style="left:166px;top:235.5px;width:100px;height:100px;border-radius:50%;background:#2f2f2f"></div><svg class="abs" style="left:166px;top:235px;" width="100" height="100" viewBox="0 0 100 100"><rect x="32" y="38.9" width="36.2" height="4.2" fill="#dbe1e3"/><rect x="32" y="49.3" width="36.2" height="4.2" fill="#dbe1e3"/><rect x="32" y="58.9" width="36.2" height="4.2" fill="#dbe1e3"/></svg><div class="abs" style="left:1520.2px;top:202.8px;width:100px;height:65px;background:#1e1e1e;border-radius:0 0 0 13px"></div><div class="abs" style="left:1619.8px;top:202.8px;width:112.4px;height:65px;background:rgba(38,82,76,0.5);border-radius:0 0 13px 0"></div><svg class="abs" style="left:1520px;top:200px;" width="214" height="70" viewBox="1520 200 214 70"><path d="M1569.89,234.17Q1576.49,225.93 1587.55,231.55L1582.48,249.24Q1581.81,236.85 1569.89,234.17Z" fill="#fff"/><path d="M1571.38,235.25Q1581.81,236.85 1582.48,249.24L1564.63,253.69Q1575.02,246.91 1571.38,235.25Z" fill="#c4c4c4"/><path d="M1571.19,237.08Q1575.02,246.91 1564.63,253.69L1551.85,240.45Q1562.91,246.07 1571.19,237.08Z" fill="#fff"/><path d="M1569.51,237.83Q1562.91,246.07 1551.85,240.45L1556.92,222.76Q1557.59,235.15 1569.51,237.83Z" fill="#c4c4c4"/><path d="M1568.02,236.75Q1557.59,235.15 1556.92,222.76L1574.77,218.31Q1564.38,225.09 1568.02,236.75Z" fill="#fff"/><path d="M1568.21,234.92Q1564.38,225.09 1574.77,218.31L1587.55,231.55Q1576.49,225.93 1568.21,234.92Z" fill="#c4c4c4"/><path d="M1569.80,235.09Q1576.49,225.93 1588.27,231.37" fill="none" stroke="#1e1e1e" stroke-width="2.39"/><path d="M1570.54,235.63Q1581.81,236.85 1582.99,249.77" fill="none" stroke="#1e1e1e" stroke-width="2.39"/><path d="M1570.44,236.54Q1575.02,246.91 1564.43,254.39" fill="none" stroke="#1e1e1e" stroke-width="2.39"/><path d="M1569.60,236.91Q1562.91,246.07 1551.13,240.63" fill="none" stroke="#1e1e1e" stroke-width="2.39"/><path d="M1568.86,236.37Q1557.59,235.15 1556.41,222.23" fill="none" stroke="#1e1e1e" stroke-width="2.39"/><path d="M1568.96,235.46Q1564.38,225.09 1574.97,217.61" fill="none" stroke="#1e1e1e" stroke-width="2.39"/><circle cx="1569.7" cy="236" r="2.21" fill="#1e1e1e"/><circle cx="1675.8" cy="226.5" r="11.4" fill="#444d55"/><path d="M1656.6,254.8v-9c0,-6 4.4,-10.2 10,-10.2h18.4c5.6,0 10,4.2 10,10.2v9c0,3 -2,5 -5,5h-28.4c-3,0 -5,-2 -5,-5z" fill="#444d55"/><path d="M1662.4,226a13.4,13.4 0 0,1 26.8,0" fill="none" stroke="#6d7f8c" stroke-width="1.8"/><rect x="1659.8" y="222.4" width="5" height="8.6" rx="2.4" fill="#6d7f8c"/><rect x="1686.8" y="222.4" width="5" height="8.6" rx="2.4" fill="#6d7f8c"/><path d="M1689.6,229.6c0,2 -1.6,2.6 -4,2.6h-10" fill="none" stroke="#6d7f8c" stroke-width="1.6"/><circle cx="1676" cy="249.6" r="6.6" fill="none" stroke="#3ec9a7" stroke-width="2.2" stroke-dasharray="3.4 1.2"/></svg><svg class="abs" style="left:2448px;top:270px;" width="48" height="48" viewBox="2448 270 48 48"><polygon points="2471.4,292.59999999999997 2489.0,302.2 2471.4,311.8 2453.8,302.2" fill="#d5dadd" stroke="#d5dadd" stroke-width="4.0" stroke-linejoin="round"/><polygon points="2471.4,285.4 2489.0,295.0 2471.4,304.6 2453.8,295.0" fill="#8b8f92" stroke="#8b8f92" stroke-width="4.0" stroke-linejoin="round"/><polygon points="2471.4,277.6 2489.0,287.6 2471.4,297.6 2453.8,287.6" fill="#d5dadd" stroke="#d5dadd" stroke-width="4.0" stroke-linejoin="round"/></svg><div class="abs" style="left:2510.6px;top:274.4px;font-size:31px;line-height:42px;color:#fff;letter-spacing:-1.4px">Layers</div><div class="abs" style="left:2650.8px;top:254.8px;width:223.4px;height:80.2px;border-radius:14px;background:#50b1a1"></div><div class="abs" style="left:2791.9px;top:254.8px;width:2.4px;height:80.2px;background:#fff"></div><div class="abs" style="left:2682.6px;top:273.4px;font-size:31.4px;line-height:42px;color:#fff;letter-spacing:-1.7px">Share</div><svg class="abs" style="left:2811px;top:271.8px;" width="46" height="46" viewBox="0 0 24 24"><g transform="rotate(-45 12 12)" fill="none" stroke="#fff" stroke-width="2.0" stroke-linecap="round"><path d="M13.4,8.3H6.3a3.7,3.7 0 0,0 0,7.4H10.2a3.6,3.6 0 0,0 2.8,-1.4"/><path d="M10.6,15.7H17.7a3.7,3.7 0 0,0 0,-7.4H13.8a3.6,3.6 0 0,0 -2.8,1.4"/></g></svg><div class="abs" style="left:2836.2px;top:661.4px;width:72px;height:222.6px;border-radius:9px 0 0 9px;background:#50b1a1"></div><div class="abs" style="left:2867.6px;top:842.8px;width:140px;height:34px;transform-origin:0 0;transform:rotate(-90deg);font-size:30px;line-height:34px;color:#fff;letter-spacing:1.1px;white-space:nowrap">Feedback</div><div class="abs" style="left:1391.9px;top:1225.9px;width:256px;height:192px;border-radius:28px;background:#212121;box-shadow:0 2px 8px rgba(0,0,0,0.5);overflow:hidden"><div class="abs" style="left:0;top:0;width:96.4px;height:96px;background:#4eb0a0"></div><div class="abs" style="left:96.4px;top:16px;width:1.6px;height:160px;background:#3a3a3a"></div></div><svg class="abs" style="left:1391px;top:1225px;" width="258" height="194" viewBox="1391 1225 258 194"><path d="M1425,1258.4L1455.2,1272.4L1443.4,1276.2L1438.8,1288.6z" fill="#fff" stroke="#fff" stroke-width="7" stroke-linejoin="round"/><g fill="#fff"><rect x="1430.3" y="1350" width="6.6" height="26" rx="3.3"/><rect x="1438.2" y="1346.2" width="6.6" height="28" rx="3.3"/><rect x="1446.4" y="1349" width="6.6" height="26" rx="3.3"/><rect x="1454.4" y="1356" width="6.6" height="22" rx="3.3"/><path d="M1430.3,1370h30.7v12c0,6 -2,12 -4,12h-22c-4,-2 -8,-8 -16,-20c-1.6,-2.6 2,-5.6 4.6,-3l6.7,7z"/></g><rect x="1524.9" y="1288.3" width="66.9" height="66.6" rx="17" fill="#d3d8db"/><text x="1557.9" y="1342.6" text-anchor="middle" font-size="67" font-weight="700" fill="#212121" textLength="35.8" lengthAdjust="spacingAndGlyphs">?</text></svg><div class="abs" style="left:172px;top:1333.7px;width:100px;height:100px;border-radius:50%;background:#2f2f2f"></div><svg class="abs" style="left:172px;top:1333px;" width="100" height="100" viewBox="172 1333 100 100"><path d="M223.6,1377.6L212.3,1383.5V1392.5M223.6,1377.6L231.3,1385M212.3,1387.8L223.6,1387.8" fill="none" stroke="#4a8fb8" stroke-width="1.2"/><circle cx="224.2" cy="1377.6" r="4.8" fill="#d2d8dc"/><circle cx="224.4" cy="1369.2" r="2.4" fill="#d2d8dc"/><circle cx="212.3" cy="1383.2" r="2.4" fill="#d2d8dc"/><circle cx="212.1" cy="1392.6" r="2.4" fill="#d2d8dc"/><circle cx="223.6" cy="1387.8" r="2.4" fill="#d2d8dc"/><circle cx="231.6" cy="1384.9" r="2.4" fill="#d2d8dc"/></svg><div class="abs" style="left:2768.2px;top:1333.7px;width:100px;height:100px;border-radius:50%;background:#2f2f2f"></div><svg class="abs" style="left:2768px;top:1333px;" width="100" height="100" viewBox="2768 1333 100 100"><circle cx="2812.8" cy="1379.4" r="11" fill="none" stroke="#dfe5e8" stroke-width="3.2"/><line x1="2821.4" y1="1388.4" x2="2833.6" y2="1399.6" stroke="#dfe5e8" stroke-width="4.4"/><path d="M2807.8,1379.4h10M2812.8,1374.4v10" stroke="#dfe5e8" stroke-width="1.8"/></svg>
<div id="edge"></div>
</div>
</body></html>
